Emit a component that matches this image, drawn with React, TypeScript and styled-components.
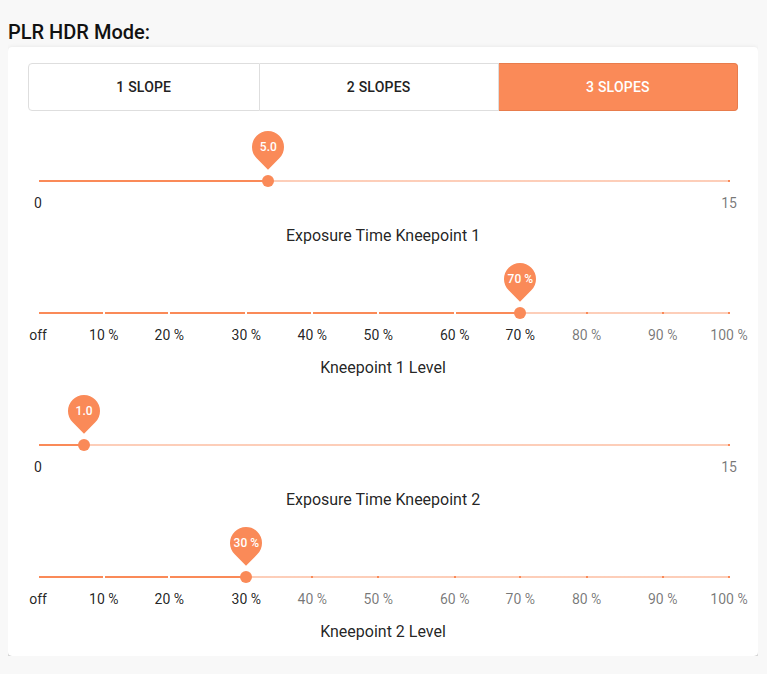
import React from "react";
import styled, { createGlobalStyle } from "styled-components";

const ORANGE = "#fa8a58";
const ORANGE_LIGHT = "rgba(250, 138, 88, 0.42)";

const GlobalStyle = createGlobalStyle`
  body {
    margin: 8px 9px 8px 8px;
    background: #f8f8f8;
    font-family: Roboto, "Liberation Sans", sans-serif;
    color: rgba(0, 0, 0, 0.87);
  }
`;

const Heading = styled.h3`
  margin: 12px 0 3px;
  font-size: 20px;
  font-weight: 500;
  line-height: 24px;
  color: #111;
`;

const Card = styled.div`
  background: #fff;
  border-radius: 4px;
  box-shadow: 0 3px 1px -2px rgba(0, 0, 0, 0.22), 0 2px 2px 0 rgba(0, 0, 0, 0.16),
    0 1px 5px 0 rgba(0, 0, 0, 0.12);
  padding: 16px 20px 12px;
`;

const Toggle = styled.div`
  display: flex;
  height: 48px;
  margin-bottom: 5px;
`;

const ToggleButton = styled.button<{ $active?: boolean }>`
  flex: 1 1 auto;
  height: 48px;
  padding: 0 16px;
  font-family: Roboto, "Liberation Sans", sans-serif;
  font-size: 14px;
  font-weight: 500;
  letter-spacing: 0.2px;
  text-transform: uppercase;
  color: ${(p) => (p.$active ? "#fff" : "#222")};
  background: ${(p) => (p.$active ? ORANGE : "#fff")};
  border: 1px solid ${(p) => (p.$active ? "#e87c4c" : "#dedede")};
  border-left-width: 0;
  cursor: pointer;

  &:first-child {
    border-left-width: 1px;
    border-radius: 4px 0 0 4px;
  }
  &:last-child {
    border-radius: 0 4px 4px 0;
  }
`;

const Block = styled.section`
  padding-top: 53px;
`;

const Rail = styled.div`
  position: relative;
  height: 24px;
  margin: 0 9px 0 10px;
`;

const Track = styled.div<{ $fill: number }>`
  position: absolute;
  left: 0;
  right: 0;
  top: 11px;
  height: 2px;
  background: linear-gradient(
    to right,
    ${ORANGE} ${(p) => p.$fill * 100}%,
    ${ORANGE_LIGHT} ${(p) => p.$fill * 100}%
  );
`;

const Tick = styled.div<{ $filled: boolean }>`
  position: absolute;
  top: 11px;
  width: 2px;
  height: 2px;
  margin-left: -1px;
  background: ${(p) => (p.$filled ? "#fff" : ORANGE)};
`;

const Thumb = styled.div`
  position: absolute;
  top: 6px;
  width: 12px;
  height: 12px;
  margin-left: -6px;
  border-radius: 50%;
  background: ${ORANGE};
`;

const Pin = styled.div`
  position: absolute;
  top: -38px;
  width: 32px;
  height: 32px;
  margin-left: -16px;
  display: flex;
  align-items: center;
  justify-content: center;

  &::before {
    content: "";
    position: absolute;
    inset: 0;
    background: ${ORANGE};
    border-radius: 50% 50% 0 50%;
    transform: rotate(45deg);
  }
`;

const PinText = styled.span`
  position: relative;
  font-size: 12px;
  font-weight: 500;
  color: #fff;
`;

const Labels = styled.div`
  position: relative;
  height: 20px;
  margin: 0 9px 0 10px;
`;

const Label = styled.span<{ $on: boolean }>`
  position: absolute;
  top: 0;
  transform: translateX(-50%);
  font-size: 14px;
  line-height: 20px;
  white-space: nowrap;
  color: ${(p) => (p.$on ? "rgba(0,0,0,0.87)" : "rgba(0,0,0,0.54)")};
`;

const Caption = styled.div`
  margin-top: 11px;
  text-align: center;
  font-size: 16px;
  line-height: 24px;
  color: rgba(0, 0, 0, 0.87);
`;

type Mark = { f: number; label: string };

const kneeMarks: Mark[] = [
  { f: 0, label: "off" },
  { f: 0.0953, label: "10 %" },
  { f: 0.19, label: "20 %" },
  { f: 0.3015, label: "30 %" },
  { f: 0.397, label: "40 %" },
  { f: 0.4925, label: "50 %" },
  { f: 0.603, label: "60 %" },
  { f: 0.698, label: "70 %" },
  { f: 0.794, label: "80 %" },
  { f: 0.904, label: "90 %" },
  { f: 1, label: "100 %" },
];

const timeMarks: Mark[] = [
  { f: 0, label: "0" },
  { f: 1, label: "15" },
];

type SliderProps = {
  value: number;
  pin: string;
  marks: Mark[];
  ticks: number[];
  caption: string;
};

const Slider: React.FC<SliderProps> = ({ value, pin, marks, ticks, caption }) => (
  <Block>
    <Rail>
      <Track $fill={value} />
      {ticks.map((t) => (
        <Tick key={t} $filled={t < value} style={{ left: `${t * 100}%` }} />
      ))}
      <Thumb style={{ left: `${value * 100}%` }} />
      <Pin style={{ left: `${value * 100}%` }}>
        <PinText>{pin}</PinText>
      </Pin>
    </Rail>
    <Labels>
      {marks.map((m) => (
        <Label key={m.label} $on={m.f <= value + 0.001} style={{ left: `${m.f * 100}%` }}>
          {m.label}
        </Label>
      ))}
    </Labels>
    <Caption>{caption}</Caption>
  </Block>
);

const kneeTicks = kneeMarks.map((m) => m.f);

const App: React.FC = () => (
  <>
    <GlobalStyle />
    <Heading>PLR HDR Mode:</Heading>
    <Card>
      <Toggle>
        <ToggleButton>1 Slope</ToggleButton>
        <ToggleButton>2 Slopes</ToggleButton>
        <ToggleButton $active>3 Slopes</ToggleButton>
      </Toggle>
      <Slider value={5 / 15} pin="5.0" marks={timeMarks} ticks={[0, 1]} caption="Exposure Time Kneepoint 1" />
      <Slider value={0.698} pin="70 %" marks={kneeMarks} ticks={kneeTicks} caption="Kneepoint 1 Level" />
      <Slider value={1 / 15} pin="1.0" marks={timeMarks} ticks={[0, 1]} caption="Exposure Time Kneepoint 2" />
      <Slider value={0.3015} pin="30 %" marks={kneeMarks} ticks={kneeTicks} caption="Kneepoint 2 Level" />
    </Card>
  </>
);

export default App;
